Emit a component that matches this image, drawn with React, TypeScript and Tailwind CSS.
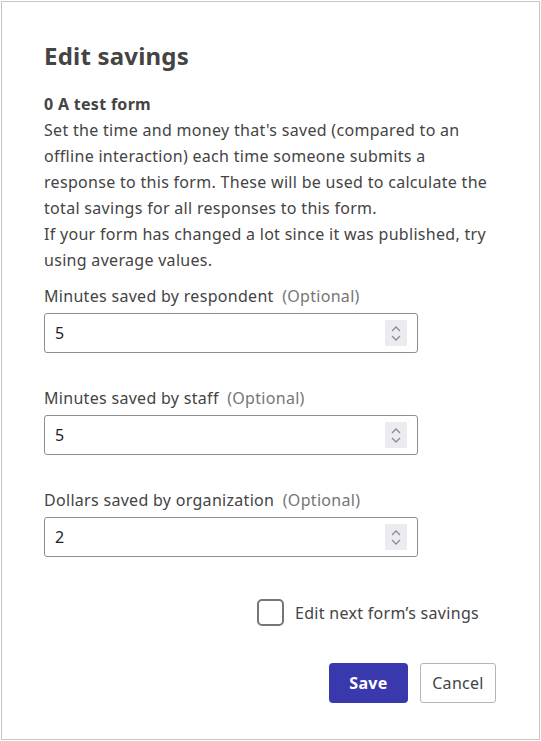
import React, { useState } from 'react';

const font = { fontFamily: '"Noto Sans", "Open Sans", Arial, sans-serif' };

function NumberField({ label, value }: { label: string; value: string }) {
  return (
    <div className="flex flex-col">
      <label className="text-[16px] leading-[24px] text-[#444]">
        {label} <span className="text-[#767676] ml-1">(Optional)</span>
      </label>
      <div className="mt-[5px] w-[374px] h-[40px] border border-[#8e8e8e] rounded-[3px] flex items-center pl-[10px] pr-[10px]">
        <span className="flex-1 text-[16px] text-[#222]">{value}</span>
        <div className="w-[22px] h-[26px] bg-[#ececf0] flex flex-col items-center justify-center gap-[3px]">
          <svg width="10" height="6" viewBox="0 0 10 6" fill="none" stroke="#8a8a96" strokeWidth="1.3">
            <path d="M1 5l4-4 4 4" />
          </svg>
          <svg width="10" height="6" viewBox="0 0 10 6" fill="none" stroke="#8a8a96" strokeWidth="1.3">
            <path d="M1 1l4 4 4-4" />
          </svg>
        </div>
      </div>
    </div>
  );
}

export default function App() {
  const [checked, setChecked] = useState(false);

  return (
    <div className="p-px bg-white tracking-[0.3px]" style={font}>
      <div className="w-[539px] h-[739px] border border-[#c6c6c6] bg-white px-[42px] pt-[38px]">
        <h2 className="text-[24px] leading-[32px] font-bold text-[#444] tracking-[0.2px]">Edit savings</h2>

        <div className="mt-[19px] text-[16px] leading-[26px] text-[#444]">
          <div className="font-bold">0 A test form</div>
          <p>
            Set the time and money that's saved (compared to an offline interaction) each time someone
            submits a response to this form. These will be used to calculate the total savings for all
            responses to this form.
          </p>
          <p>If your form has changed a lot since it was published, try using average values.</p>
        </div>

        <div className="mt-[11px] flex flex-col gap-[33px]">
          <NumberField label="Minutes saved by respondent" value="5" />
          <NumberField label="Minutes saved by staff" value="5" />
          <NumberField label="Dollars saved by organization" value="2" />
        </div>

        <div className="mt-[42px] flex justify-end pr-[18px]">
          <label className="flex items-center gap-[11px] cursor-pointer">
            <button
              onClick={() => setChecked(!checked)}
              className="w-[27px] h-[27px] border-2 border-[#767676] rounded-[5px] bg-white"
            />
            <span className="text-[16px] text-[#444]">Edit next form’s savings</span>
          </label>
        </div>

        <div className="mt-[37px] flex justify-end gap-[12px] pr-px">
          <button className="w-[79px] h-[40px] rounded-[4px] bg-[#3939ad] text-white text-[16px] font-bold">
            Save
          </button>
          <button className="w-[76px] h-[40px] rounded-[3px] border border-[#b5b5b5] bg-white text-[#444] text-[16px]">
            Cancel
          </button>
        </div>
      </div>
    </div>
  );
}
